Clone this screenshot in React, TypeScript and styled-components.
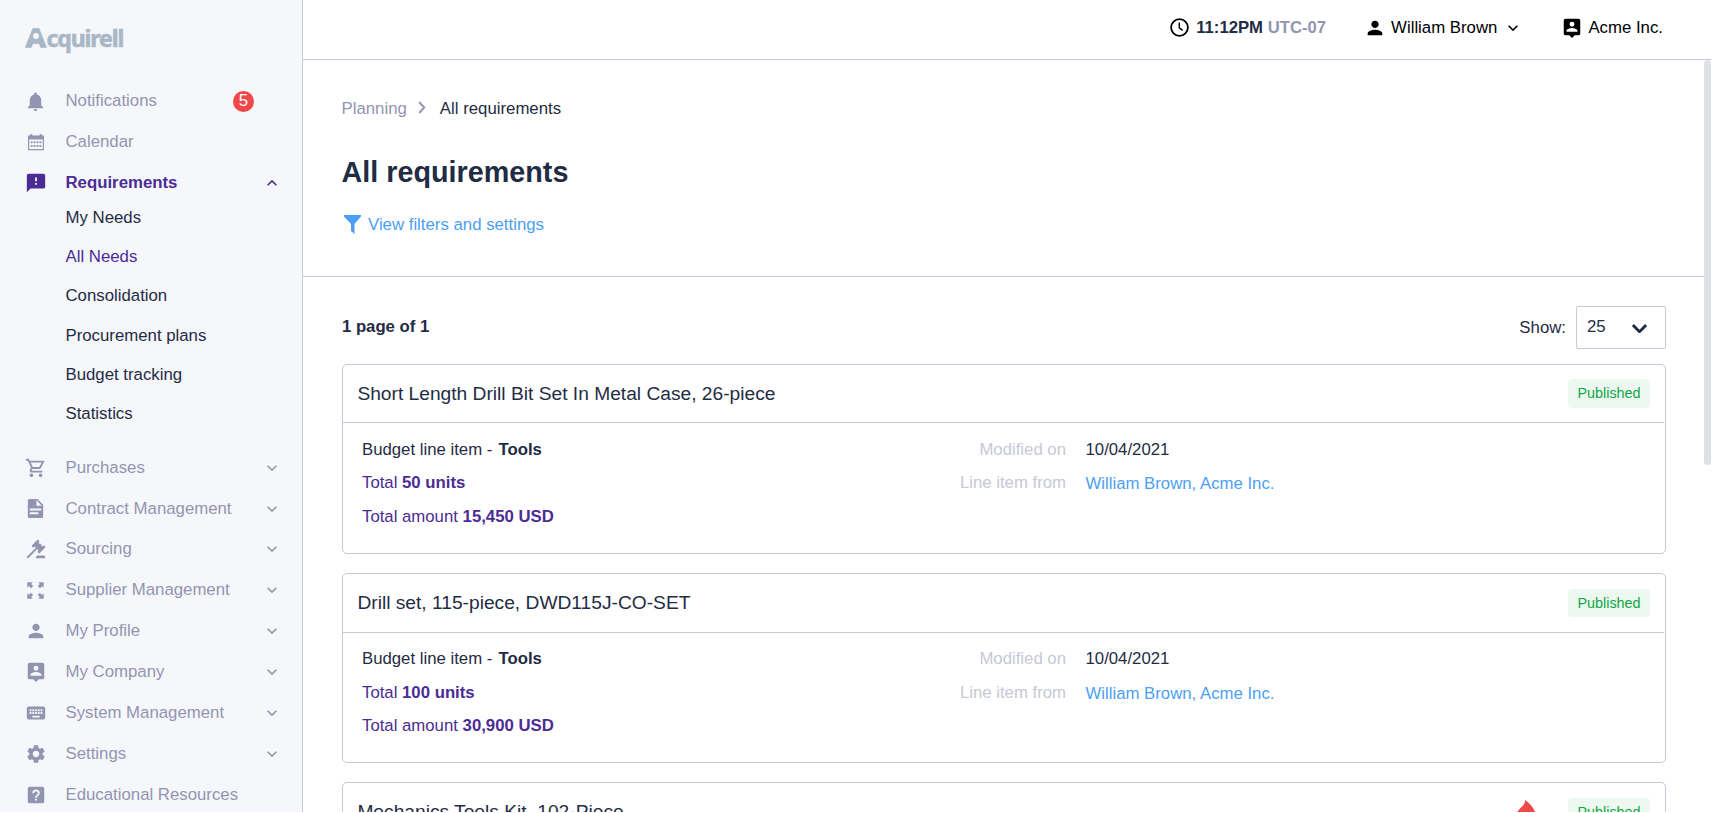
import React from 'react';
import styled, { createGlobalStyle } from 'styled-components';
import {
  MdNotifications, MdFeedback, MdOutlineShoppingCart, MdPerson, MdKeyboard, MdSettings,
} from 'react-icons/md';

const c = {
  side: '#f6f7fb', gray: '#9295b0', line: '#c7c9d7', dark: '#1f2c44', purple: '#4b2c94',
  red: '#f04848', blue: '#4c9ff3', green: '#12a647', mint: '#edf8f1', label: '#c6c9d5',
};

const Global = createGlobalStyle`
  * { box-sizing: border-box; }
  body { margin: 0; background: #fff; overflow: hidden; }
  h1, h2 { margin: 0; font-weight: inherit; }
  svg { flex: none; }
`;

const Page = styled.div`
  display: flex;
  width: 1711px;
  height: 812px;
  overflow: hidden;
  background: #fff;
  color: ${c.dark};
  font: 16.8px/20px "Liberation Sans", Arial, sans-serif;
`;

const Sidebar = styled.nav`
  flex: none;
  width: 303px;
  height: 812px;
  background: ${c.side};
  border-right: 1px solid ${c.line};
  padding-top: 19px;
  overflow: hidden;
`;

const Logo = styled.div`
  position: relative;
  height: 62px;
  padding-left: 26px;
  font: 700 23px/36px "Noto Sans", sans-serif;
  letter-spacing: -1.1px;
  color: #a9b8c6;
  -webkit-text-stroke: 0.6px #a9b8c6;
  &::after {
    content: '';
    position: absolute;
    left: 33px;
    top: 14px;
    width: 6px;
    height: 6px;
    border-radius: 50%;
    background: ${c.side};
  }
`;

const LogoInitial = styled.span`
  display: inline-block;
  width: 20.5px;
  font-size: 25px;
  letter-spacing: 0;
  transform: scaleX(1.14);
  transform-origin: left;
  -webkit-text-stroke: 1.4px #a9b8c6;
`;

const NavRow = styled.div<{ $active?: boolean }>`
  display: flex;
  align-items: center;
  height: 40.9px;
  padding: 0 25px 0 25px;
  color: ${p => (p.$active ? c.purple : c.gray)};
  font-weight: ${p => (p.$active ? 700 : 400)};
`;

const NavIcon = styled.span`
  display: flex;
  justify-content: center;
  width: 21px;
  margin-right: 19.5px;
`;

const NavLabel = styled.span`
  flex: 1;
  white-space: nowrap;
`;

const Count = styled.span`
  width: 21px;
  height: 21px;
  margin: 1px 23px 0 0;
  border-radius: 50%;
  background: ${c.red};
  color: #fff;
  text-align: center;
  line-height: 20px;
`;

const SubList = styled.div`
  padding: 0 0 13.8px 65.5px;
  margin-top: -6px;
`;

const SubItem = styled.div<{ $active?: boolean }>`
  height: 39.3px;
  line-height: 39.3px;
  color: ${p => (p.$active ? c.purple : c.dark)};
`;

const Main = styled.div`
  flex: 1;
  display: flex;
  flex-direction: column;
  min-width: 0;
`;

const TopBar = styled.header`
  flex: none;
  display: flex;
  align-items: center;
  justify-content: flex-end;
  height: 60px;
  padding: 0 48px 4px 0;
  border-bottom: 1px solid ${c.line};
  color: #000;
`;

const Clock = styled.div`
  display: flex;
  align-items: center;
  gap: 7px;
  margin-right: 38px;
  font-weight: 700;
  font-size: 16.7px;
  color: ${c.dark};
  svg { color: #000; }
  em { font-style: normal; color: ${c.gray}; }
`;

const User = styled.div`
  display: flex;
  align-items: center;
  gap: 5px;
  margin-right: 43px;
  svg:last-child { margin-left: 6px; }
`;

const Company = styled.div`
  display: flex;
  align-items: center;
  gap: 5px;
`;

const Body = styled.div`
  flex: 1;
  display: flex;
  min-height: 0;
`;

const Scroll = styled.div`
  flex: 1;
  overflow: hidden;
`;

const Thumb = styled.div`
  width: 7px;
  height: 405px;
  border-radius: 4px;
  background: #e0e1e6;
`;

const Intro = styled.section`
  height: 217px;
  padding: 39px 39px 0 38.5px;
  border-bottom: 1px solid ${c.line};
`;

const Crumbs = styled.div`
  display: flex;
  align-items: center;
  height: 20px;
  svg { margin: 0 14px 3px 11px; }
`;

const Muted = styled.span`
  color: ${c.gray};
`;

const Title = styled.h1`
  margin: 36px 0 26px;
  font-size: 28.75px;
  line-height: 34px;
  font-weight: 700;
`;

const FilterLink = styled.a`
  display: flex;
  align-items: center;
  gap: 7px;
  padding-left: 2.5px;
  color: ${c.blue};
  svg { margin-bottom: 1px; }
`;

const List = styled.section`
  padding: 29px 38px 0 39px;
`;

const ListBar = styled.div`
  display: flex;
  align-items: center;
  justify-content: space-between;
  height: 43px;
  margin-bottom: 15px;
`;

const PageCount = styled.strong`
  font-size: 16.7px;
  margin-bottom: 2px;
`;

const Show = styled.div`
  display: flex;
  align-items: center;
  gap: 10px;
`;

const Select = styled.div`
  display: flex;
  align-items: center;
  justify-content: space-between;
  width: 90px;
  height: 43px;
  padding: 0 18px 2px 10px;
  border: 1px solid ${c.line};
  border-radius: 2px;
  svg { margin-top: 4px; }
`;

const Card = styled.article`
  height: 190px;
  margin-bottom: 19.2px;
  border: 1px solid ${c.line};
  border-radius: 5px;
`;

const CardHead = styled.div`
  display: flex;
  align-items: center;
  height: 58.4px;
  margin-right: 1px;
  padding: 0 14px 0 14.4px;
  border-bottom: 1px solid ${c.line};
`;

const CardTitle = styled.h2`
  flex: 1;
  font-size: 19.2px;
  line-height: 24px;
`;

const Status = styled.span`
  width: 82px;
  height: 28.5px;
  border-radius: 4px;
  background: ${c.mint};
  color: ${c.green};
  font-size: 14.4px;
  line-height: 28px;
  text-align: center;
`;

const CardBody = styled.div`
  display: grid;
  grid-template-columns: 704px 1fr;
  column-gap: 19.5px;
  padding: 16.5px 19px 0;
  font-size: 16.75px;
`;

const Facts = styled.div`
  display: flex;
  justify-content: space-between;
`;

const Column = styled.div<{ $right?: boolean }>`
  display: flex;
  flex-direction: column;
  gap: 13.5px;
  text-align: ${p => (p.$right ? 'right' : 'left')};
`;

const Category = styled.b`
  margin-left: 1.5px;
`;

const Label = styled.span`
  color: ${c.label};
`;

const Amount = styled.span`
  color: ${c.purple};
`;

const Person = styled.a`
  margin-top: 1px;
  color: ${c.blue};
`;

const Flame = styled.svg`
  margin-right: 32px;
`;

const Chevron = ({ up = false, w = 10, sw = 1.6 }: { up?: boolean; w?: number; sw?: number }) => (
  <svg width={w} height={w * 0.6} viewBox="0 0 10 6" fill="none" stroke="currentColor" strokeWidth={sw}>
    <path d={up ? 'M.6 5.3 5 .9l4.4 4.4' : 'M.6.7 5 5.1 9.4.7'} />
  </svg>
);

const Glyph = ({ d, size = 22 }: { d: string; size?: number }) => (
  <svg width={size} height={size} viewBox="0 0 24 24" fill="currentColor"><path d={d} /></svg>
);

const glyphs = {
  doc: 'M13 9h5.5L13 3.5V9M6 2h8l6 6v12a2 2 0 0 1-2 2H6a2 2 0 0 1-2-2V4c0-1.11.89-2 2-2m9 16v-2H6v2h9m3-4v-2H6v2h12z',
  gavel: 'M2.3 20.28l9.6-9.6-1.4-1.42-.72.71c-.39.39-1.02.39-1.41 0l-.71-.71c-.39-.39-.39-1.02 0-1.41l5.66-5.66c.39-.39 1.02-.39 1.41 0l.71.71c.39.39.39 1.02 0 1.41L14.73 5l1.42 1.43c.39-.39 1.02-.39 1.41 0s.39 1.03 0 1.42l1.41 1.41.71-.71c.39-.39 1.03-.39 1.42 0l.7.71c.39.39.39 1.03 0 1.42l-5.65 5.65c-.39.39-1.03.39-1.42 0l-.7-.7c-.4-.39-.4-1.03 0-1.42l.7-.71-1.41-1.41-9.61 9.61c-.39.39-1.02.39-1.41 0s-.39-1.03 0-1.42M20 19a2 2 0 0 1 2 2v1H12v-1a2 2 0 0 1 2-2h6z',
  pin: 'M19 2H5a2 2 0 0 0-2 2v14c0 1.1.9 2 2 2h4l3 3 3-3h4c1.1 0 2-.9 2-2V4a2 2 0 0 0-2-2zm-7 3.3a2.7 2.7 0 1 1 0 5.4 2.7 2.7 0 0 1 0-5.4zM18 16H6v-.9c0-2 4-3.1 6-3.1s6 1.1 6 3.1v.9z',
  help: 'M11 18h2v-2h-2zm1-12a4 4 0 0 0-4 4h2a2 2 0 0 1 2-2 2 2 0 0 1 2 2c0 2-3 1.75-3 5h2c0-2.25 3-2.5 3-5a4 4 0 0 0-4-4M5 3h14a2 2 0 0 1 2 2v14a2 2 0 0 1-2 2H5a2 2 0 0 1-2-2V5a2 2 0 0 1 2-2',
};

const Calendar = () => (
  <svg width="18" height="18" viewBox="0 0 18 18" fill="currentColor">
    <path fillRule="evenodd" d="M1 2.6h16v14.6H1zM2.2 6.6v9.4h13.6V6.6z" />
    <rect x="3" y="1" width="2.4" height="3" rx="1" />
    <rect x="12.6" y="1" width="2.4" height="3" rx="1" />
    {[8.3, 12].map(y => [3.8, 6.7, 9.6, 12.5].map(x => (
      <rect key={`${x}-${y}`} x={x} y={y} width="1.9" height="1.9" />
    )))}
  </svg>
);

const Expand = () => (
  <svg width="17" height="17" viewBox="0 0 17 17" fill="currentColor">
    {[0, 90, 180, 270].map(a => (
      <path key={a} transform={`rotate(${a} 8.5 8.5)`} d="M.3.3h5.4L4.2 1.9l2 2.1-2.1 2.2L2 4.1.3 5.7z" />
    ))}
  </svg>
);

const ClockIcon = () => (
  <svg width="19" height="19" viewBox="0 0 19 19" fill="none" stroke="currentColor" strokeWidth="1.8">
    <circle cx="9.5" cy="9.5" r="8.4" />
    <path d="M9.3 4.5v5.3l3.4 2.6" strokeWidth="1.4" />
  </svg>
);

const subItems = ['My Needs', 'All Needs', 'Consolidation', 'Procurement plans', 'Budget tracking', 'Statistics'];

const sections: { label: string; icon: React.ReactNode; leaf?: boolean }[] = [
  { label: 'Purchases', icon: <MdOutlineShoppingCart size={22} /> },
  { label: 'Contract Management', icon: <Glyph d={glyphs.doc} size={23} /> },
  { label: 'Sourcing', icon: <Glyph d={glyphs.gavel} /> },
  { label: 'Supplier Management', icon: <Expand /> },
  { label: 'My Profile', icon: <MdPerson size={22} /> },
  { label: 'My Company', icon: <Glyph d={glyphs.pin} /> },
  { label: 'System Management', icon: <MdKeyboard size={22} /> },
  { label: 'Settings', icon: <MdSettings size={22} /> },
  { label: 'Educational Resources', icon: <Glyph d={glyphs.help} />, leaf: true },
];

const needs = [
  { title: 'Short Length Drill Bit Set In Metal Case, 26-piece', units: '50 units', amount: '15,450 USD' },
  { title: 'Drill set, 115-piece, DWD115J-CO-SET', units: '100 units', amount: '30,900 USD' },
  { title: 'Mechanics Tools Kit, 102-Piece', units: '', amount: '', hot: true },
];

export default function App() {
  return (
    <Page>
      <Global />
      <Sidebar>
        <Logo><LogoInitial>A</LogoInitial>cquirell</Logo>
        <NavRow><NavIcon><MdNotifications size={23} /></NavIcon><NavLabel>Notifications</NavLabel><Count>5</Count></NavRow>
        <NavRow><NavIcon><Calendar /></NavIcon><NavLabel>Calendar</NavLabel></NavRow>
        <NavRow $active><NavIcon><MdFeedback size={22} /></NavIcon><NavLabel>Requirements</NavLabel><Chevron up /></NavRow>
        <SubList>
          {subItems.map(s => <SubItem key={s} $active={s === 'All Needs'}>{s}</SubItem>)}
        </SubList>
        {sections.map(s => (
          <NavRow key={s.label}>
            <NavIcon>{s.icon}</NavIcon><NavLabel>{s.label}</NavLabel>{!s.leaf && <Chevron />}
          </NavRow>
        ))}
      </Sidebar>
      <Main>
        <TopBar>
          <Clock><ClockIcon /><span>11:12PM <em>UTC-07</em></span></Clock>
          <User><MdPerson size={22} /><span>William Brown</span><Chevron /></User>
          <Company><Glyph d={glyphs.pin} /><span>Acme Inc.</span></Company>
        </TopBar>
        <Body>
          <Scroll>
            <Intro>
              <Crumbs>
                <Muted>Planning</Muted>
                <svg width="8" height="13" viewBox="0 0 8 13" fill="none" stroke={c.gray} strokeWidth="1.9"><path d="M1.2 1l5 5.5-5 5.5" /></svg>
                <span>All requirements</span>
              </Crumbs>
              <Title>All requirements</Title>
              <FilterLink>
                <svg width="17" height="19" viewBox="0 0 17 19" fill="currentColor"><path d="M0 0h17v1.5L10.5 9v10L7 16V9L0 1.5z" /></svg>
                View filters and settings
              </FilterLink>
            </Intro>
            <List>
              <ListBar>
                <PageCount>1 page of 1</PageCount>
                <Show>Show:<Select>25<Chevron w={15} sw={1.9} /></Select></Show>
              </ListBar>
              {needs.map(n => (
                <Card key={n.title}>
                  <CardHead>
                    <CardTitle>{n.title}</CardTitle>
                    {n.hot && (
                      <Flame width="20" height="24" viewBox="0 0 20 24" fill={c.red}>
                        <path d="M9 0C9.5 5 4.500 7 2 11-1 17 4 24 10 24s10-6 9-12C17 7 13 2.500 9 0z" />
                      </Flame>
                    )}
                    <Status>Published</Status>
                  </CardHead>
                  {n.units && (
                    <CardBody>
                      <Facts>
                        <Column>
                          <span>Budget line item - <Category>Tools</Category></span>
                          <Amount>Total <b>{n.units}</b></Amount>
                          <Amount>Total amount <b>{n.amount}</b></Amount>
                        </Column>
                        <Column $right>
                          <Label>Modified on</Label>
                          <Label>Line item from</Label>
                        </Column>
                      </Facts>
                      <Column>
                        <span>10/04/2021</span>
                        <Person>William Brown, Acme Inc.</Person>
                      </Column>
                    </CardBody>
                  )}
                </Card>
              ))}
            </List>
          </Scroll>
          <Thumb />
        </Body>
      </Main>
    </Page>
  );
}
